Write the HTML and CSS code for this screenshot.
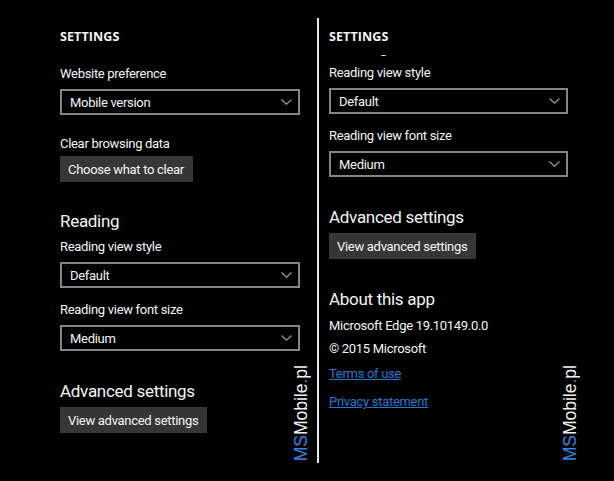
FILE: index.html
```html
<!DOCTYPE html>
<html lang="en">
<head>
    <meta charset="UTF-8">
    <meta name="viewport" content="width=device-width, initial-scale=1.0">
    <title>Settings</title>
    <link rel="stylesheet" href="styles.css">
</head>
<body>
    <div class="screen">
        <div class="panel panel-left">
            <h1 class="title">SETTINGS</h1>
            <div class="settings">
                <div class="label">Website preference</div>
                <div class="dropdown">
                    <span>Mobile version</span>
                    <svg class="chevron" width="11" height="6" viewBox="0 0 11 6"><path d="M0.5 0.5 L5.5 5.2 L10.5 0.5" fill="none" stroke="#9a9a9a" stroke-width="1.2"/></svg>
                </div>

                <div class="label label-tight">Clear browsing data</div>
                <button class="btn">Choose what to clear</button>

                <h2 class="heading">Reading</h2>
                <div class="label">Reading view style</div>
                <div class="dropdown">
                    <span>Default</span>
                    <svg class="chevron" width="11" height="6" viewBox="0 0 11 6"><path d="M0.5 0.5 L5.5 5.2 L10.5 0.5" fill="none" stroke="#9a9a9a" stroke-width="1.2"/></svg>
                </div>
                <div class="label label-gap">Reading view font size</div>
                <div class="dropdown">
                    <span>Medium</span>
                    <svg class="chevron" width="11" height="6" viewBox="0 0 11 6"><path d="M0.5 0.5 L5.5 5.2 L10.5 0.5" fill="none" stroke="#9a9a9a" stroke-width="1.2"/></svg>
                </div>

                <h2 class="heading heading-gap">Advanced settings</h2>
                <button class="btn">View advanced settings</button>
            </div>
        </div>

        <div class="divider"></div>

        <div class="panel panel-right">
            <h1 class="title">SETTINGS</h1>
            <div class="viewport">
                <div class="settings scrolled">
                    <h2 class="heading heading-first">Reading</h2>
                    <div class="label">Reading view style</div>
                    <div class="dropdown">
                        <span>Default</span>
                        <svg class="chevron" width="11" height="6" viewBox="0 0 11 6"><path d="M0.5 0.5 L5.5 5.2 L10.5 0.5" fill="none" stroke="#9a9a9a" stroke-width="1.2"/></svg>
                    </div>
                    <div class="label label-gap">Reading view font size</div>
                    <div class="dropdown">
                        <span>Medium</span>
                        <svg class="chevron" width="11" height="6" viewBox="0 0 11 6"><path d="M0.5 0.5 L5.5 5.2 L10.5 0.5" fill="none" stroke="#9a9a9a" stroke-width="1.2"/></svg>
                    </div>

                    <h2 class="heading heading-gap">Advanced settings</h2>
                    <button class="btn">View advanced settings</button>

                    <h2 class="heading heading-gap heading-about">About this app</h2>
                    <div class="info">Microsoft Edge 19.10149.0.0</div>
                    <div class="info">&copy; 2015 Microsoft</div>
                    <a class="link" href="#">Terms of use</a>
                    <a class="link link-last" href="#">Privacy statement</a>
                </div>
            </div>
        </div>

        <div class="watermark watermark-left"><span class="wm-blue">MS</span>Mobile<span class="wm-blue">.</span>pl</div>
        <div class="watermark watermark-right"><span class="wm-blue">MS</span>Mobile<span class="wm-blue">.</span>pl</div>
    </div>
</body>
</html>
```

FILE: styles.css
```css
body {
    margin: 0;
    padding: 0;
    background-color: #000;
    color: #f4f4f4;
    font-family: Roboto, "Noto Sans", sans-serif;
    font-size: 13px;
    letter-spacing: -0.3px;
}
.screen {
    position: relative;
    width: 614px;
    height: 481px;
    display: flex;
    align-items: flex-start;
    overflow: hidden;
}
.panel {
    width: 240px;
    padding-top: 27px;
}
.panel-left {
    margin-left: 60px;
    margin-right: 17px;
}
.panel-right {
    width: 239px;
    margin-left: 10px;
}
.divider {
    width: 2px;
    height: 445px;
    margin-top: 18px;
    background-color: #e8e8e8;
}
.title {
    margin: 0;
    font-family: "Open Sans", sans-serif;
    font-size: 12.5px;
    font-weight: 700;
    line-height: 20px;
    letter-spacing: 0.1px;
}
.settings {
    padding-top: 17px;
}
/* right column is scrolled so only the bottom of "Reading" peeks out */
.viewport {
    height: 408px;
    margin-top: 8px;
    overflow: hidden;
}
.scrolled {
    margin-top: -21px;
    padding-top: 0;
}
.label {
    line-height: 20px;
    margin-bottom: 5px;
}
.label-tight {
    margin-top: 19px;
    margin-bottom: 2px;
}
.label-gap {
    margin-top: 12px;
}
.dropdown {
    box-sizing: border-box;
    height: 26px;
    border: 2px solid #858585;
    padding: 0 6px 0 8px;
    display: flex;
    align-items: center;
    justify-content: space-between;
}
.btn {
    display: block;
    height: 26px;
    padding: 0 9px 0 8px;
    border: none;
    background-color: #363636;
    color: #f4f4f4;
    font-family: inherit;
    font-size: 13px;
    letter-spacing: -0.3px;
}
.heading {
    margin: 26px 0 3px;
    font-size: 17px;
    font-weight: 400;
    line-height: 26px;
    letter-spacing: -0.3px;
}
.heading-first {
    margin-top: 0;
}
.heading-gap {
    margin-top: 27px;
}
.heading-about {
    margin-bottom: 2px;
}
.info {
    line-height: 23px;
}
.link {
    display: block;
    margin-top: 2px;
    line-height: 23px;
    color: #2479d2;
}
.link-last {
    margin-top: 5px;
}
.watermark {
    position: absolute;
    bottom: 20px;
    writing-mode: vertical-rl;
    transform: rotate(180deg);
    font-family: "Liberation Sans", Arial, sans-serif;
    font-size: 17.5px;
    line-height: 18px;
    letter-spacing: 0;
    color: #f2f2f2;
}
.watermark-left {
    left: 292px;
}
.watermark-right {
    left: 561px;
}
.wm-blue {
    color: #3584e4;
}
```
